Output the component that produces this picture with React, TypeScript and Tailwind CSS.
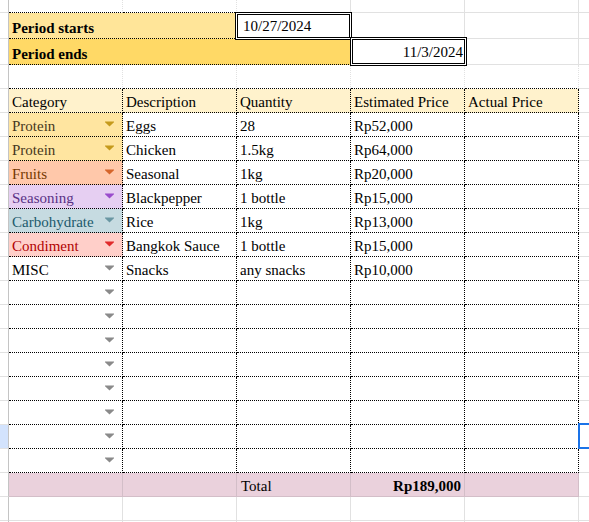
import React from 'react'

type Cat = { name: string; bg: string; text: string; arrow: string }

const cats: Record<string, Cat> = {
  protein: { name: 'Protein', bg: 'bg-[#ffe5a0]', text: 'text-[#473821]', arrow: 'fill-[#c59a1c]' },
  fruits: { name: 'Fruits', bg: 'bg-[#ffc8aa]', text: 'text-[#753800]', arrow: 'fill-[#d5652a]' },
  seasoning: { name: 'Seasoning', bg: 'bg-[#e6cff2]', text: 'text-[#5a3286]', arrow: 'fill-[#9a4ccc]' },
  carb: { name: 'Carbohydrate', bg: 'bg-[#c6dbe1]', text: 'text-[#215a6c]', arrow: 'fill-[#6a97a3]' },
  condiment: { name: 'Condiment', bg: 'bg-[#ffcfc9]', text: 'text-[#b10202]', arrow: 'fill-[#e02b2b]' },
  misc: { name: 'MISC', bg: 'bg-white', text: 'text-black', arrow: 'fill-[#8a8a8a]' },
}

const items = [
  { cat: 'protein', desc: 'Eggs', qty: '28', price: 'Rp52,000' },
  { cat: 'protein', desc: 'Chicken', qty: '1.5kg', price: 'Rp64,000' },
  { cat: 'fruits', desc: 'Seasonal', qty: '1kg', price: 'Rp20,000' },
  { cat: 'seasoning', desc: 'Blackpepper', qty: '1 bottle', price: 'Rp15,000' },
  { cat: 'carb', desc: 'Rice', qty: '1kg', price: 'Rp13,000' },
  { cat: 'condiment', desc: 'Bangkok Sauce', qty: '1 bottle', price: 'Rp15,000' },
  { cat: 'misc', desc: 'Snacks', qty: 'any snacks', price: 'Rp10,000' },
]

// 8 baris kosong di bawah data
const emptyRows = Array.from({ length: 8 }, (_, i) => i)

const grid = 'border-r border-b border-[#e1e1e1]'
const dotted = 'border-r border-b border-dotted border-black'
const dottedBottom = 'border-r border-r-[#e1e1e1] border-b border-dotted border-b-black'

function Arrow({ color }: { color: string }) {
  return (
    <svg width="9" height="6" viewBox="0 0 9 6" className={`${color} shrink-0`}>
      <path d="M0 0.5h9v0.8L4.5 5.5 0 1.3z" />
    </svg>
  )
}

function Side({ cls = '' }: { cls?: string }) {
  return <div className={`w-[9px] h-full shrink-0 border-r border-b border-b-[#e1e1e1] border-r-[#c4c4c4] ${cls}`} />
}

function Right({ children }: { children?: React.ReactNode }) {
  return <div className="relative w-[10px] h-full shrink-0 border-b border-[#e1e1e1]">{children}</div>
}

function Cell({ w = 'w-[114px]', cls = grid, children }: { w?: string; cls?: string; children?: React.ReactNode }) {
  return (
    <div className={`${w} h-full shrink-0 flex items-end px-[3px] pb-[1px] leading-[17px] whitespace-nowrap overflow-hidden ${cls}`}>
      {children}
    </div>
  )
}

function CatCell({ c }: { c?: Cat }) {
  const cat = c ?? cats.misc
  return (
    <div className={`w-[114px] h-full shrink-0 flex items-end justify-between pl-[3px] pr-[8px] pb-[1px] leading-[17px] ${dotted} ${c ? cat.bg : 'bg-white'}`}>
      <span className={cat.text}>{c ? cat.name : ''}</span>
      <span className="self-center pb-[1px]">
        <Arrow color={cat.arrow} />
      </span>
    </div>
  )
}

export default function App() {
  return (
    <div className="w-[589px] h-[522px] overflow-hidden bg-white text-black text-[15px] font-['Liberation_Serif','Times_New_Roman',serif]">
      {/* baris atas yang terpotong */}
      <div className="flex h-[13px]">
        <Side />
        <Cell cls={dottedBottom} />
        <Cell cls={dottedBottom} />
        <Cell />
        <Cell />
        <Cell />
        <Right />
      </div>

      <div className="flex h-[26px]">
        <Side />
        <Cell w="w-[228px]" cls="bg-[#ffe599] border-b border-dotted border-black font-bold">
          Period starts
        </Cell>
        <div className="relative w-[114px] h-full shrink-0">
          <div className="absolute -left-[2px] -top-[1px] -right-[1px] -bottom-[1px] border-[3px] border-double border-black bg-white flex items-end pl-[5px] pb-[2px] leading-[17px]">
            10/27/2024
          </div>
        </div>
        <Cell />
        <Cell />
        <Right />
      </div>

      <div className="flex h-[26px]">
        <Side />
        <Cell w="w-[342px]" cls="bg-[#ffd966] border-b border-dotted border-black font-bold">
          Period ends
        </Cell>
        <div className="relative w-[114px] h-full shrink-0">
          <div className="absolute -left-[1px] -top-[2px] -right-[2px] -bottom-[1px] border-[3px] border-double border-black bg-white flex items-end justify-end pr-[1px] pb-[2px] leading-[17px]">
            11/3/2024
          </div>
        </div>
        <Cell />
        <Right />
      </div>

      <div className="flex h-[24px]">
        <Side />
        <Cell cls={dottedBottom} />
        <Cell cls={dottedBottom} />
        <Cell cls={dottedBottom} />
        <Cell cls={dottedBottom} />
        <Cell cls={dottedBottom} />
        <Right />
      </div>

      {/* header tabel */}
      <div className="flex h-[24px]">
        <Side />
        {['Category', 'Description', 'Quantity', 'Estimated Price', 'Actual Price'].map((h) => (
          <Cell key={h} cls={`bg-[#fff2cc] ${dotted}`}>
            {h}
          </Cell>
        ))}
        <Right />
      </div>

      {items.map((it, i) => (
        <div key={i} className="flex h-[24px]">
          <Side />
          <CatCell c={cats[it.cat]} />
          <Cell cls={dotted}>{it.desc}</Cell>
          <Cell cls={dotted}>{it.qty}</Cell>
          <Cell cls={dotted}>{it.price}</Cell>
          <Cell cls={dotted} />
          <Right />
        </div>
      ))}

      {emptyRows.map((i) => (
        <div key={'e' + i} className="flex h-[24px]">
          <Side cls={i === 6 ? 'bg-[#d3e3fd]' : ''} />
          <CatCell />
          <Cell cls={dotted} />
          <Cell cls={dotted} />
          <Cell cls={dotted} />
          <Cell cls={dotted} />
          <Right>
            {i === 6 && <div className="absolute -left-[1px] -top-[2px] w-[20px] h-[26px] border-2 border-[#1a73e8]" />}
          </Right>
        </div>
      ))}

      {/* total */}
      <div className="flex h-[24px]">
        <Side />
        <Cell cls="bg-[#ead1dc] border-r border-b border-[#d3bec8]" />
        <Cell cls="bg-[#ead1dc] border-r border-b border-[#d3bec8]" />
        <Cell cls="bg-[#ead1dc] border-r border-b border-[#d3bec8] pl-[4px]">Total</Cell>
        <Cell cls="bg-[#ead1dc] border-r border-b border-[#d3bec8] justify-end font-bold">Rp189,000</Cell>
        <Cell cls="bg-[#ead1dc] border-r border-b border-[#d3bec8]" />
        <Right />
      </div>

      <div className="flex h-[24px]">
        <Side />
        <Cell />
        <Cell />
        <Cell />
        <Cell />
        <Cell />
        <Right />
      </div>
      <div className="flex h-[24px]">
        <Side />
        <Cell />
        <Cell />
        <Cell />
        <Cell />
        <Cell />
        <Right />
      </div>
    </div>
  )
}
